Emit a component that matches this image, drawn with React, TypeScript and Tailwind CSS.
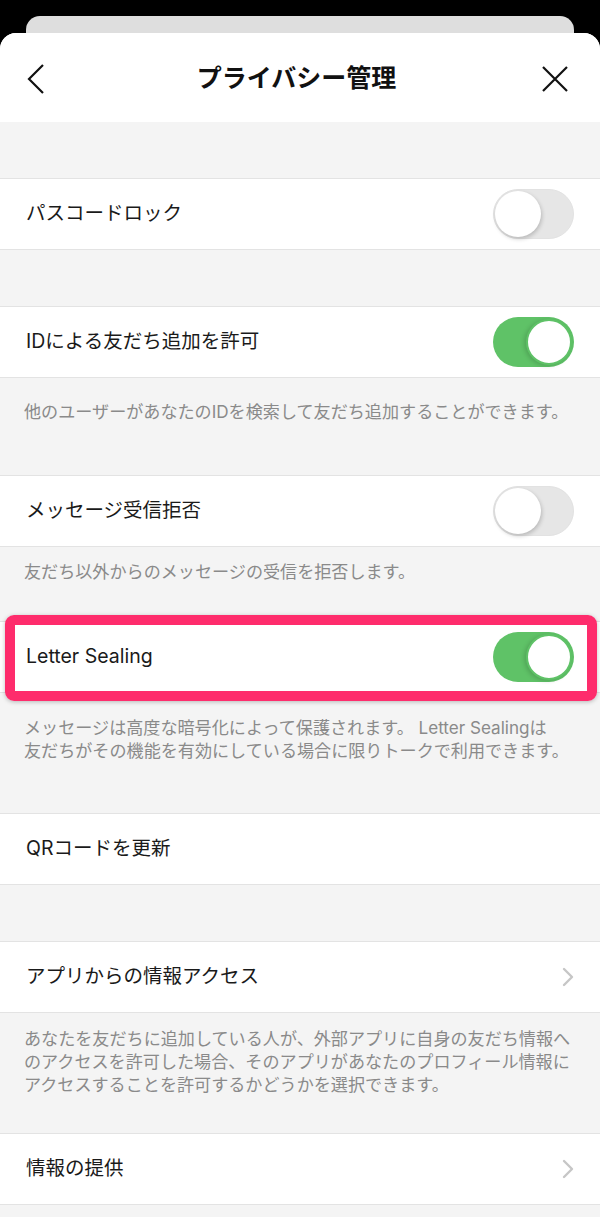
import { ReactNode } from "react";

const FONT = { fontFamily: '"Inter", "Noto Sans CJK JP", sans-serif' };

function Toggle({ on }: { on: boolean }) {
  if (on) {
    return (
      <div className="flex h-[50px] w-[81px] items-center justify-end rounded-full bg-[#5fc267] pr-[2px]">
        <div className="h-[46px] w-[46px] rounded-full border-2 border-[#5fc267] bg-white shadow-[-2px_1px_4px_rgba(0,0,0,0.15)]" />
      </div>
    );
  }
  return (
    <div className="flex h-[50px] w-[81px] items-center rounded-full border border-[#e2e2e2] bg-[#e6e6e6] pl-[1px]">
      <div className="h-[46px] w-[46px] rounded-full bg-white shadow-[1px_2px_4px_rgba(0,0,0,0.2)]" />
    </div>
  );
}

function Chevron() {
  return (
    <svg width="12" height="20" viewBox="0 0 12 20" fill="none">
      <path
        d="M2 2l8 8-8 8"
        stroke="#c6c6c6"
        strokeWidth="2.4"
        strokeLinecap="round"
        strokeLinejoin="round"
      />
    </svg>
  );
}

function Row({
  label,
  right,
  children,
}: {
  label: string;
  right?: ReactNode;
  children?: ReactNode;
}) {
  return (
    <div className="relative flex h-[72px] items-center justify-between border-y border-[#e3e3e3] bg-white pl-[26px] pr-[26px]">
      <span className="text-[19.5px] text-[#1a1a1a]">{label}</span>
      {right}
      {children}
    </div>
  );
}

function Desc({ pt, h, children }: { pt: string; h: string; children: ReactNode }) {
  return (
    <div className={`${pt} ${h} whitespace-nowrap px-[24px] text-[17.1px] leading-[23px] text-[#8a8a8a]`}>
      {children}
    </div>
  );
}

export default function App() {
  return (
    <div className="min-h-screen bg-black" style={FONT}>
      <div className="h-[33px] px-[26px] pt-[16px]">
        <div className="h-[17px] rounded-t-[14px] bg-[#dedede]" />
      </div>
      <div className="overflow-hidden rounded-t-[16px] bg-[#f4f4f4] pb-[12px]">
        <div className="flex h-[89px] items-center justify-between bg-white pl-[26px] pr-[31px] pt-[3px]">
          <svg width="20" height="32" viewBox="0 0 20 32" fill="none">
            <path d="M17 2L3 16l14 14" stroke="#111" strokeWidth="2.2" />
          </svg>
          <h1 className="pl-[6px] text-[25px] font-bold text-[#111]">プライバシー管理</h1>
          <svg width="28" height="28" viewBox="0 0 28 28" fill="none">
            <path d="M2 2l24 24M26 2L2 26" stroke="#111" strokeWidth="2.2" />
          </svg>
        </div>

        <div className="h-[56px]" />
        <Row label="パスコードロック" right={<Toggle on={false} />} />

        <div className="h-[56px]" />
        <Row label="IDによる友だち追加を許可" right={<Toggle on />} />
        <Desc pt="pt-[22px]" h="h-[97px]">
          他のユーザーがあなたのIDを検索して友だち追加することができます。
        </Desc>

        <Row label="メッセージ受信拒否" right={<Toggle on={false} />} />
        <Desc pt="pt-[13px]" h="h-[74px]">
          友だち以外からのメッセージの受信を拒否します。
        </Desc>

        <Row label="Letter Sealing" right={<Toggle on />}>
          <div className="absolute -top-[7px] -bottom-[9px] left-[5px] right-[3px] rounded-[9px] border-[10px] border-[#fe2c6c] shadow-[0_1px_4px_rgba(0,0,0,0.25)]" />
        </Row>
        <Desc pt="pt-[23px]" h="h-[120px]">
          メッセージは高度な暗号化によって保護されます。 Letter Sealingは
          <br />
          友だちがその機能を有効にしている場合に限りトークで利用できます。
        </Desc>

        <Row label="QRコードを更新" />

        <div className="h-[56px]" />
        <Row label="アプリからの情報アクセス" right={<Chevron />} />
        <Desc pt="pt-[14px]" h="h-[120px]">
          あなたを友だちに追加している人が、外部アプリに自身の友だち情報へ
          <br />
          のアクセスを許可した場合、そのアプリがあなたのプロフィール情報に
          <br />
          アクセスすることを許可するかどうかを選択できます。
        </Desc>

        <Row label="情報の提供" right={<Chevron />} />
      </div>
    </div>
  );
}
